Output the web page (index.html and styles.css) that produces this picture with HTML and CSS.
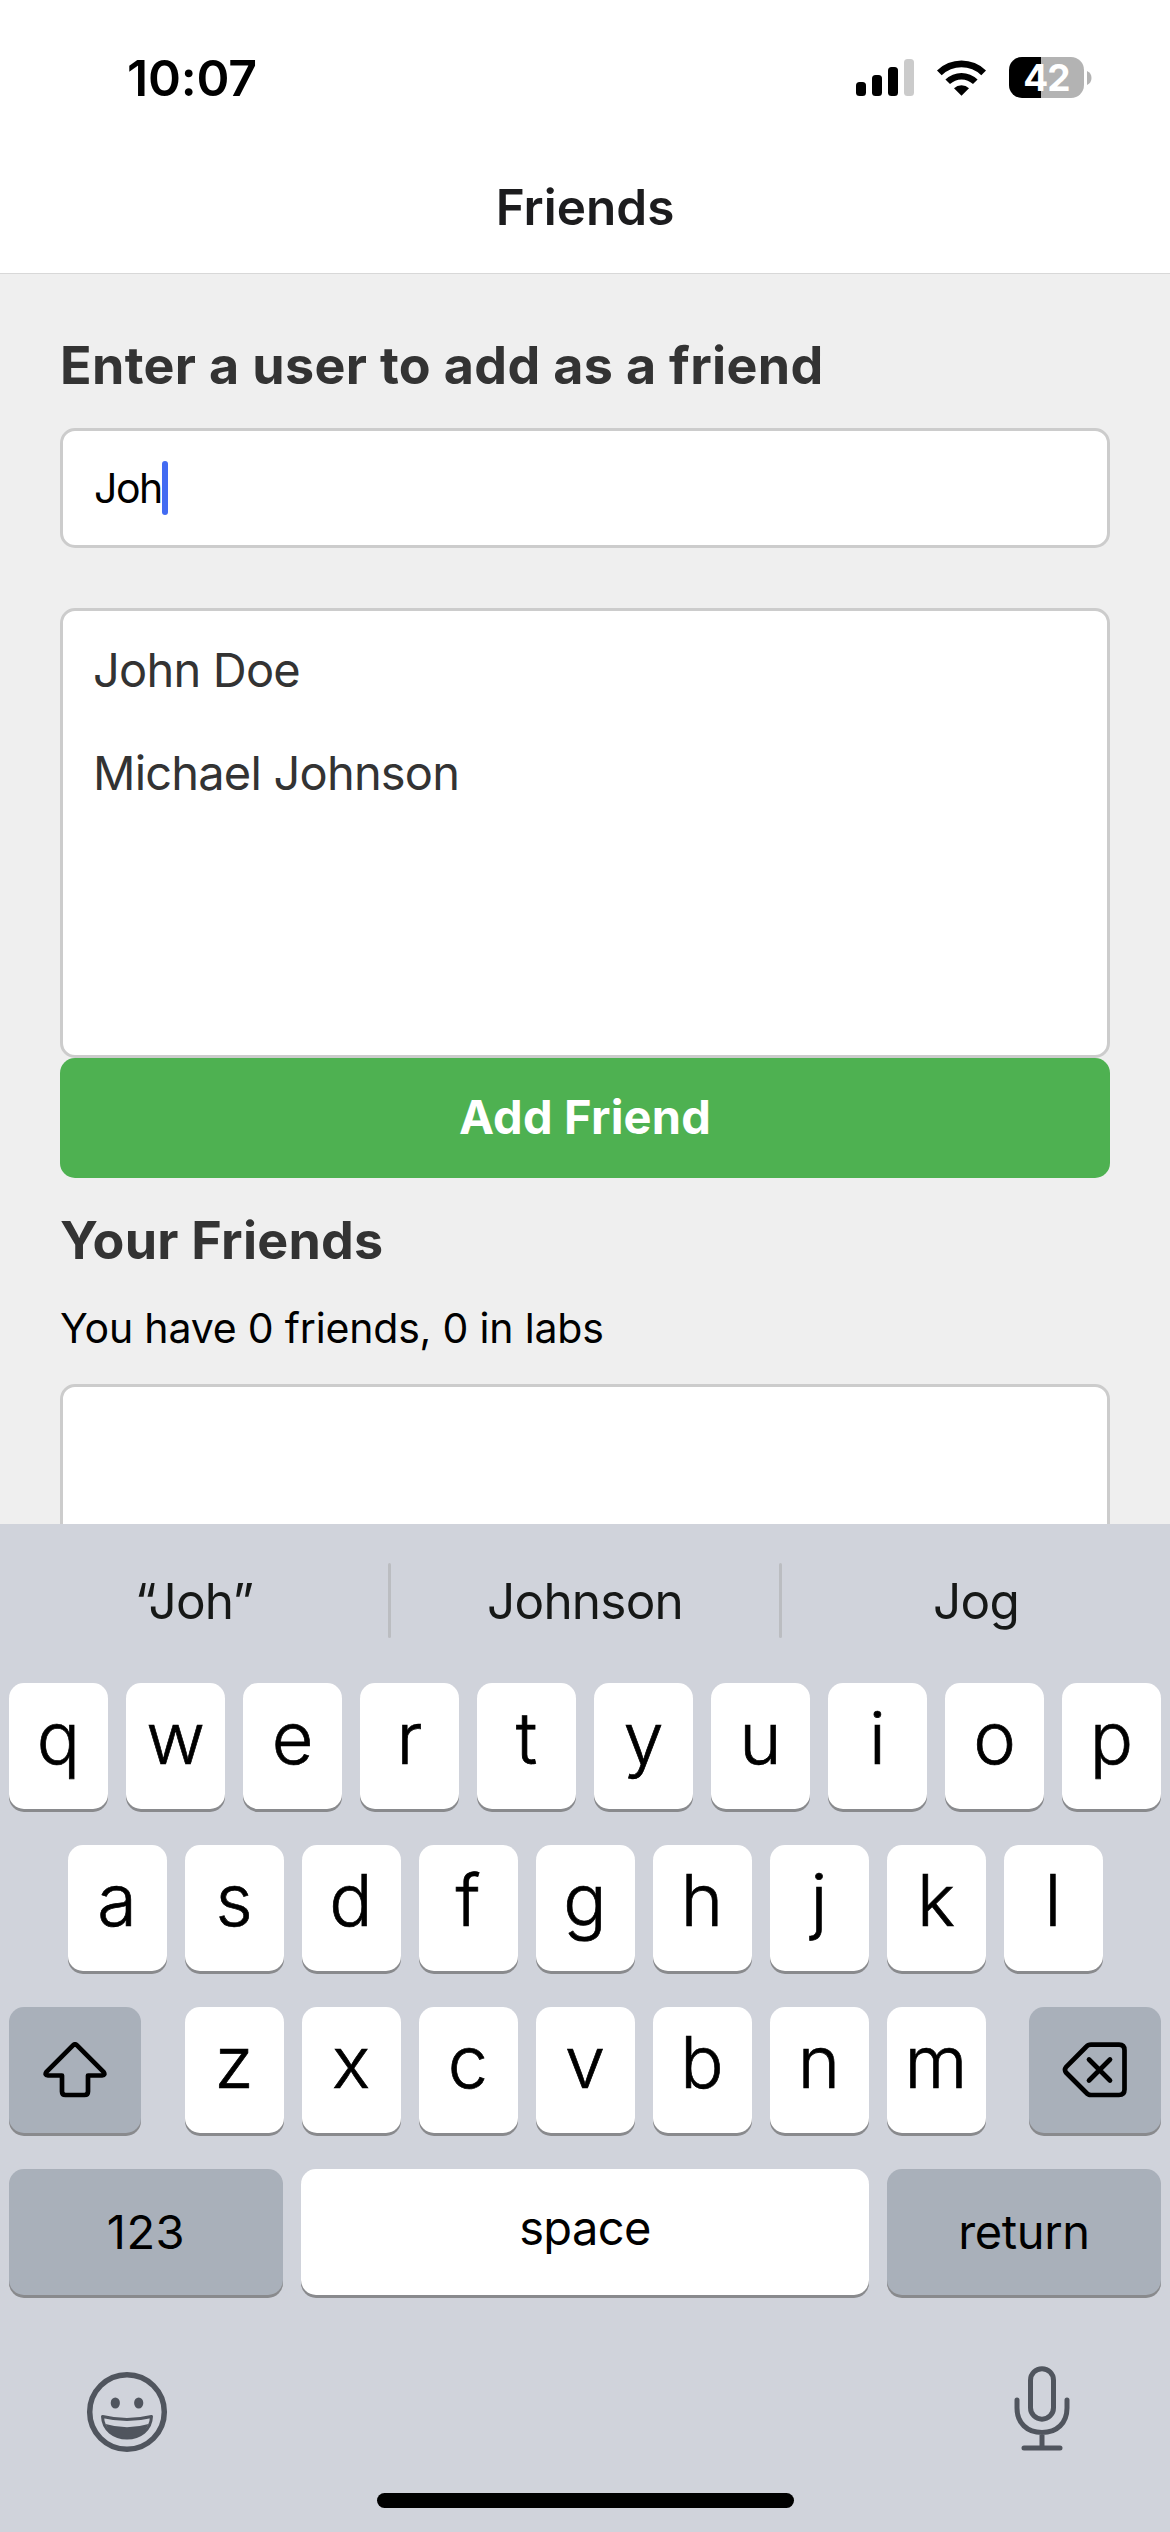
FILE: index.html
```html
<!DOCTYPE html>
<html lang="en">
<head>
<meta charset="utf-8">
<title>Friends</title>
<link rel="stylesheet" href="styles.css">
</head>
<body>
<div class="screen">
  <header class="header">
    <div class="status">
      <span class="time">10:07</span>
      <div class="indicators">
        <svg class="signal" width="58" height="38" viewBox="0 0 58 38">
          <rect x="0" y="23" width="10" height="14" rx="3.5"/>
          <rect x="16" y="16" width="10" height="21" rx="3.5"/>
          <rect x="32" y="8" width="10" height="29" rx="3.5"/>
          <rect x="48" y="0" width="10" height="37" rx="3.5" fill="#cbcbcb"/>
        </svg>
        <svg class="wifi" width="51" height="38" viewBox="0 0 51 38">
          <path d="M1 11.5A35 35 0 0 1 50 11.5L45.3 16.2A28.4 28.4 0 0 0 5.700 16.200Z"/>
          <path d="M9.400 20.500A23 23 0 0 1 41.600 20.500L37 25.100A16.500 16.500 0 0 0 14 25.100Z"/>
          <path d="M18 29.200A11 11 0 0 1 33 29.200L25.500 36.800Z"/>
        </svg>
        <div class="battery"><span class="battery-level">42</span></div>
        <svg class="battery-cap" width="5" height="14" viewBox="0 0 5 14"><path d="M0 0Q4.500 2 4.500 7T0 14Z" fill="#b3b3b3"/></svg>
      </div>
    </div>
    <h1 class="title">Friends</h1>
  </header>

  <main class="content">
    <h2 class="heading">Enter a user to add as a friend</h2>
    <div class="input"><span class="input-text">Joh</span><span class="caret"></span></div>
    <ul class="results">
      <li>John Doe</li>
      <li>Michael Johnson</li>
    </ul>
    <button class="add-button" type="button">Add Friend</button>
    <h2 class="heading your-heading">Your Friends</h2>
    <p class="summary">You have 0 friends, 0 in labs</p>
    <div class="friends-box"></div>
  </main>

  <section class="keyboard">
    <div class="suggestions">
      <span>“Joh”</span><i></i><span>Johnson</span><i></i><span>Jog</span>
    </div>
    <div class="keys">
      <div class="row">
        <b class="key">q</b><b class="key">w</b><b class="key">e</b><b class="key">r</b><b class="key">t</b><b class="key">y</b><b class="key">u</b><b class="key">i</b><b class="key">o</b><b class="key">p</b>
      </div>
      <div class="row">
        <b class="key">a</b><b class="key">s</b><b class="key">d</b><b class="key">f</b><b class="key">g</b><b class="key">h</b><b class="key">j</b><b class="key">k</b><b class="key">l</b>
      </div>
      <div class="row spread">
        <b class="key dark side">
          <svg width="64" height="56" viewBox="0 0 64 56" fill="none" stroke="#000" stroke-width="4.700" stroke-linejoin="round">
            <path d="M30.200 3.200Q32 1.500 33.800 3.200L60.500 29.800Q62.800 33.200 59 33.500H45V49.500Q45 53 41.500 53H22.500Q19 53 19 49.500V33.500H5Q1.200 33.200 3.500 29.800Z"/>
          </svg>
        </b>
        <div class="letters">
          <b class="key">z</b><b class="key">x</b><b class="key">c</b><b class="key">v</b><b class="key">b</b><b class="key">n</b><b class="key">m</b>
        </div>
        <b class="key dark side">
          <svg width="66" height="56" viewBox="0 0 66 56" fill="none" stroke="#000" stroke-width="4.700" stroke-linecap="round" stroke-linejoin="round">
            <path d="M29 2.700H57Q62.500 2.700 62.500 8.200V47.500Q62.500 53 57 53H29Q26 53 24 50.500L4 30.500Q2 27.800 4 25.200L24 5Q26 2.700 29 2.700Z"/>
            <path d="M27 17.500L48 38.500M48 17.500L27 38.500"/>
          </svg>
        </b>
      </div>
      <div class="row">
        <b class="key dark wide">123</b>
        <b class="key space">space</b>
        <b class="key dark wide return">return</b>
      </div>
    </div>
    <div class="tools">
      <svg class="emoji" width="82" height="82" viewBox="0 0 82 82" fill="none" stroke="#50555e">
        <circle cx="41" cy="41" r="37.300" stroke-width="5.500"/>
        <ellipse cx="29.300" cy="32" rx="4.600" ry="5.500" fill="#50555e" stroke="none"/>
        <ellipse cx="52.700" cy="32" rx="4.600" ry="5.500" fill="#50555e" stroke="none"/>
        <path d="M16.500 45.500Q41 51.500 65.500 45.500C65 59 54 67 41 67S17 59 16.500 45.500Z" stroke-width="3" stroke-linejoin="round"/>
        <path d="M19.500 53Q41 59.500 62.500 53C58 63.500 50 67.500 41 67.500S24 63.500 19.500 53Z" fill="#50555e" stroke="none"/>
      </svg>
      <svg width="58" height="86" viewBox="0 0 58 86" fill="none" stroke="#50555e" stroke-width="5" stroke-linecap="round">
        <rect x="16.500" y="2.700" width="23" height="50.500" rx="11.500"/>
        <path d="M3 34V42C3 57 13 66.500 28 66.500S53 57 53 42V34M28 66.500V82M10 82H46"/>
      </svg>
    </div>
    <div class="home-bar"></div>
  </section>
</div>
</body>
</html>
```
FILE: styles.css
```css
* { box-sizing: border-box; margin: 0; padding: 0; }

body {
  width: 1170px;
  height: 2532px;
  overflow: hidden;
  font-family: Inter, "Liberation Sans", sans-serif;
  background: #efefef;
}

.screen { display: flex; flex-direction: column; height: 2532px; }

.header { height: 274px; background: #fff; border-bottom: 1px solid #d8d8d8; }
.status { display: flex; justify-content: space-between; height: 146px; padding: 48px 78px 0 127px; }
.time { font-size: 50px; line-height: 60px; font-weight: 600; letter-spacing: -0.2px; }
.indicators { display: flex; align-items: flex-start; padding-top: 9px; }
.signal { margin-top: 2px; }
.wifi { margin: 2px 22px 0 22px; }
.battery {
  width: 75px; height: 41px; border-radius: 13px;
  background: linear-gradient(to right, #000 32px, #b3b3b3 32px);
  color: #fff; text-align: center;
}
.battery-level { font-size: 37px; line-height: 41px; font-weight: 700; letter-spacing: -0.8px; }
.battery-cap { margin: 14px 0 0 3px; }
.title {
  font-size: 49.500px; line-height: 60px; padding-top: 31px;
  height: 120px; font-weight: 600; text-align: center; color: #1c1c1e;
}

.content { height: 1250px; overflow: hidden; padding: 60px 60px 0; }
.heading { font-size: 52px; line-height: 64px; font-weight: 700; letter-spacing: 0.35px; color: #333; }
.input {
  display: flex; align-items: center; height: 120px; margin-top: 30px; padding-left: 31px;
  border: 3px solid #ccc; border-radius: 15px; background: #fff;
}
.input-text { font-size: 41px; letter-spacing: -1.5px; }
.caret { width: 6px; height: 54px; border-radius: 3px; background: #426bf2; }
.results {
  height: 450px; margin-top: 60px; padding: 7px 30px; list-style: none;
  border: 3px solid #ccc; border-radius: 15px; background: #fff;
}
.results li { height: 103px; font-size: 47px; line-height: 103px; letter-spacing: -0.8px; color: #333; }
.add-button {
  display: block; width: 100%; height: 120px; padding-bottom: 2px; border: 0; border-radius: 15px;
  background: #4eb151; color: #fff; font: 700 47px/118px Inter, sans-serif; letter-spacing: 0.2px;
}
.your-heading { margin-top: 31px; letter-spacing: 0.25px; }
.summary { margin-top: 30px; font-size: 41px; line-height: 50px; letter-spacing: -0.18px; }
.friends-box { height: 300px; margin-top: 31px; border: 3px solid #ccc; border-radius: 15px; background: #fff; }

.keyboard { display: flex; flex-direction: column; height: 1008px; background: #d0d3db; }
.suggestions { display: flex; height: 159px; padding-top: 39px; }
.suggestions span { flex: 1; text-align: center; font-size: 49.500px; line-height: 76px; letter-spacing: -0.8px; color: #161817; }
.suggestions i { width: 3px; height: 75px; border-radius: 2px; background: #bbbdc1; }

.keys { display: flex; flex-direction: column; gap: 36px; padding: 0 9px; }
.row { display: flex; justify-content: center; gap: 18px; height: 126px; }
.spread { justify-content: space-between; }
.letters { display: flex; gap: 18px; }
.key {
  display: flex; justify-content: center; align-items: center; width: 99px; height: 126px;
  padding-bottom: 17px;
  border-radius: 15px; background: #fff; box-shadow: 0 3px 0 #898a8d;
  font-size: 72px; font-weight: 300; line-height: 90px;
  -webkit-text-stroke: 0.7px #000;
}
.dark { background: #a9b0ba; padding-bottom: 0; }
.side { width: 132px; }
.wide, .space { font-size: 47px; font-weight: 400; -webkit-text-stroke: 0; }
.wide { width: 274px; letter-spacing: 0.5px; }
.return { letter-spacing: -0.4px; }
.space { flex: 1; padding-bottom: 8px; letter-spacing: -0.6px; }

.tools { display: flex; justify-content: space-between; align-items: flex-start; padding: 71px 98px 0 86px; height: 198px; }
.emoji { margin-top: 5px; }
.home-bar { width: 417px; height: 15px; margin: 0 auto; border-radius: 8px; background: #000; }
```
